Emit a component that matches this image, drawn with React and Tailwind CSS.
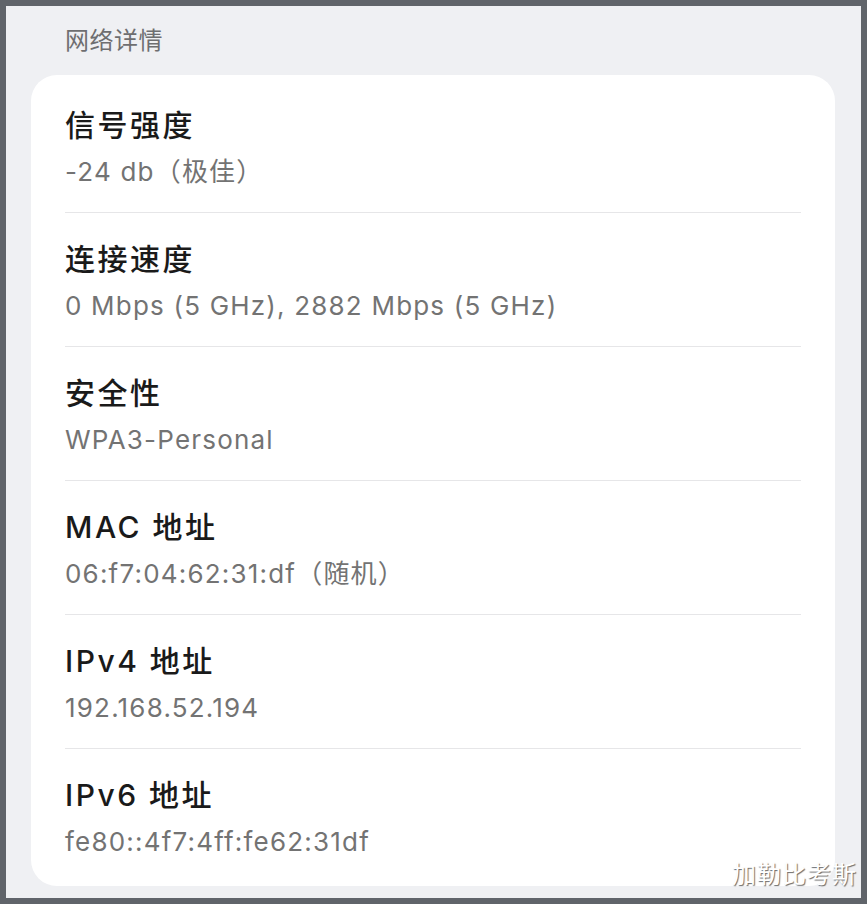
import React from 'react';

const rows = [
  { title: '信号强度', value: '-24 db（极佳）' },
  { title: '连接速度', value: '0 Mbps (5 GHz), 2882 Mbps (5 GHz)' },
  { title: '安全性', value: 'WPA3-Personal' },
  { title: 'MAC 地址', value: '06:f7:04:62:31:df（随机）' },
  { title: 'IPv4 地址', value: '192.168.52.194' },
  { title: 'IPv6 地址', value: 'fe80::4f7:4ff:fe62:31df' },
];

const App = () => {
  return (
    <div
      className="relative w-[867px] h-[904px] border-[6px] border-[#60646a] bg-[#eff0f3] overflow-hidden"
      style={{ fontFamily: 'Inter, "Noto Sans CJK SC", sans-serif' }}
    >
      <div className="pl-[59px] pt-[20px] h-[69px] text-[24px] leading-[30px] tracking-[0.5px] text-[#6e6e70]">网络详情</div>

      <div className="ml-[25px] w-[804px] bg-white rounded-[26px] py-[4px]">
        {rows.map((row, i) => (
          <div key={row.title} className="px-[34px]">
            <div className={i > 0 ? 'border-t border-[#e6e6e8]' : ''}>
              <div className="pt-[26px] pb-[21px] flex flex-col gap-[8px]">
                <div className="text-[30px] leading-[40px] tracking-[2.5px] text-[#1a1a1a] font-medium">{row.title}</div>
                <div className="text-[26px] leading-[38px] tracking-[1.2px] text-[#737373]">{row.value}</div>
              </div>
            </div>
          </div>
        ))}
      </div>

      <div
        className="absolute right-[4px] bottom-[9px] text-[24px] leading-[28px] text-white tracking-[1px]"
        style={{ textShadow: '1px 1px 1px #6a6a6a' }}
      >
        加勒比考斯
      </div>
    </div>
  );
};

export default App;
